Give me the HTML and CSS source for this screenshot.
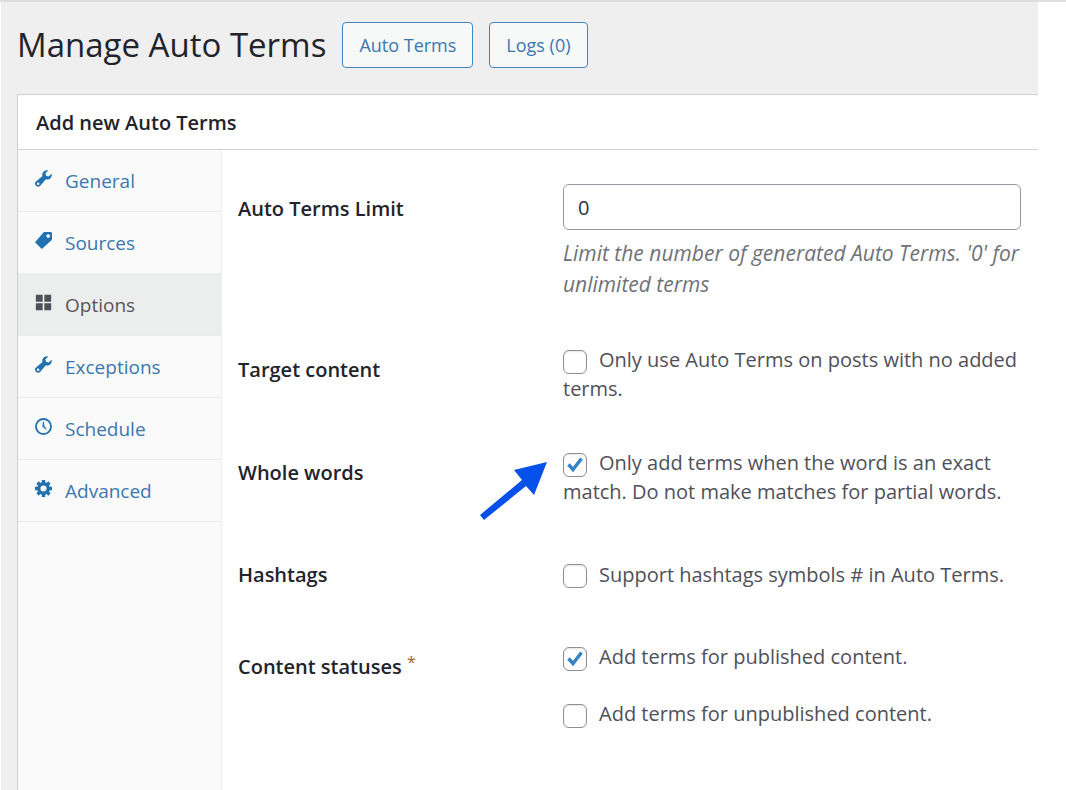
FILE: index.html
```html
<!DOCTYPE html>
<html lang="en">
<head>
    <meta charset="UTF-8">
    <meta name="viewport" content="width=device-width, initial-scale=1.0">
    <title>Manage Auto Terms</title>
    <link rel="stylesheet" href="styles.css">
</head>
<body>

    <div class="wrap">
        <header class="page-header">
            <h1>Manage Auto Terms</h1>
            <button type="button" class="page-action">Auto Terms</button>
            <button type="button" class="page-action">Logs (0)</button>
        </header>

        <section class="postbox">
            <h2>Add new Auto Terms</h2>
            <div class="postbox-inside">
                <nav class="tabs">
                    <a href="#general">
                        <svg viewBox="0 0 20 20"><path fill-rule="evenodd" d="M19.500 4.500 16 7.500l-3-.7-.7-3L15.500.5C12.500-.4 9.500 1.300 8.700 4c-.3 1-.2 2 .1 3L1.200 13.600a3.500 3.500 0 1 0 5 5L12.800 11c1 .4 2 .4 3 .1 2.800-.8 4.500-3.700 3.700-6.600zM3.700 14.700a1.500 1.500 0 1 1 0 3 1.500 1.500 0 0 1 0-3z"/></svg>
                        General
                    </a>
                    <a href="#sources">
                        <svg viewBox="0 0 20 20"><path fill-rule="evenodd" d="M10.500 0H19l1 1v8L8 20l-8-8zM15.500 2.500a2.200 2.200 0 1 0 0 4.400 2.200 2.200 0 0 0 0-4.400z"/></svg>
                        Sources
                    </a>
                    <a href="#options" class="active">
                        <svg viewBox="0 0 20 20"><path d="M1 1h8v8H1zM11 1h8v8h-8zM1 11h8v8H1zM11 11h8v8h-8z"/></svg>
                        Options
                    </a>
                    <a href="#exceptions">
                        <svg viewBox="0 0 20 20"><path fill-rule="evenodd" d="M19.500 4.500 16 7.500l-3-.7-.7-3L15.500.5C12.500-.4 9.500 1.300 8.700 4c-.3 1-.2 2 .1 3L1.200 13.600a3.500 3.500 0 1 0 5 5L12.800 11c1 .4 2 .4 3 .1 2.800-.8 4.500-3.700 3.700-6.600zM3.700 14.700a1.500 1.500 0 1 1 0 3 1.500 1.500 0 0 1 0-3z"/></svg>
                        Exceptions
                    </a>
                    <a href="#schedule">
                        <svg viewBox="0 0 20 20"><circle cx="10" cy="10" r="8.800" fill="none" stroke="currentColor" stroke-width="2.200"/><path d="M9.300 4.500h1.200l.6 5.300 2.700 3.400-.7.700-4.300-3.500z"/></svg>
                        Schedule
                    </a>
                    <a href="#advanced">
                        <svg viewBox="0 0 20 20"><circle cx="10" cy="10" r="5.600" fill="none" stroke="currentColor" stroke-width="4"/><path d="M10 0v4M10 16v4M0 10h4M16 10h4M3 3l3 3M14 14l3 3M17 3l-3 3M6 14l-3 3" fill="none" stroke="currentColor" stroke-width="4"/></svg>
                        Advanced
                    </a>
                </nav>

                <form class="options-form">
                    <div class="form-row">
                        <label class="form-label" for="terms-limit">Auto Terms Limit</label>
                        <div class="form-field">
                            <input type="text" id="terms-limit" value="0">
                            <p class="description">Limit the number of generated Auto Terms. '0' for unlimited terms</p>
                        </div>
                    </div>
                    <div class="form-row">
                        <div class="form-label">Target content</div>
                        <div class="form-field">
                            <input type="checkbox" id="target-content"><label for="target-content">Only use Auto Terms on posts with no added terms.</label>
                        </div>
                    </div>
                    <div class="form-row">
                        <div class="form-label">Whole words</div>
                        <div class="form-field">
                            <svg class="arrow" viewBox="0 0 68 58"><path fill="#0550e8" d="M67 0 34 8l8 10L0 53l4 5 42-34 8 9z"/></svg>
                            <input type="checkbox" id="whole-words" checked><label for="whole-words">Only add terms when the word is an exact match. Do not make matches for partial words.</label>
                        </div>
                    </div>
                    <div class="form-row centered">
                        <div class="form-label">Hashtags</div>
                        <div class="form-field">
                            <input type="checkbox" id="hashtags"><label for="hashtags">Support hashtags symbols # in Auto Terms.</label>
                        </div>
                    </div>
                    <div class="form-row">
                        <div class="form-label">Content statuses <span class="required">*</span></div>
                        <div class="form-field statuses">
                            <div><input type="checkbox" id="published" checked><label for="published">Add terms for published content.</label></div>
                            <div><input type="checkbox" id="unpublished"><label for="unpublished">Add terms for unpublished content.</label></div>
                        </div>
                    </div>
                </form>
            </div>
        </section>
    </div>

</body>
</html>
```
FILE: styles.css
```css
* {
    box-sizing: border-box;
}

body {
    margin: 0;
    min-height: 100vh;
    display: flex;
    border-top: 2px solid #dedede;
    background-color: #fff;
    color: #50505a;
    font-family: "Segoe UI", "Open Sans", sans-serif;
    font-size: 20px;
    line-height: 29px;
}

.wrap {
    flex: 1;
    display: flex;
    flex-direction: column;
    margin: 0 28px 0 1px;
    padding-left: 16px;
    background-color: #efefef;
}

.page-header {
    display: flex;
    align-items: center;
    gap: 16px;
    height: 92px;
    padding-bottom: 6px;
}

.page-header h1 {
    margin: 0;
    color: #23232b;
    font-size: 33px;
    font-weight: 400;
    line-height: 46px;
}

.page-action {
    height: 46px;
    padding: 0 16px;
    border: 1px solid #4385c0;
    border-radius: 4px;
    background-color: #f7f8f8;
    color: #3a77b0;
    font-family: inherit;
    font-size: 18px;
    cursor: pointer;
}

.postbox {
    flex: 1;
    display: flex;
    flex-direction: column;
    border-top: 1px solid #d0d0d0;
    border-left: 1px solid #d0d0d0;
    background-color: #fff;
}

.postbox h2 {
    margin: 0;
    padding: 13px 18px 11px;
    border-bottom: 1px solid #d0d0d0;
    color: #23232b;
    font-size: 20px;
    font-weight: 600;
    line-height: 30px;
}

.postbox-inside {
    flex: 1;
    display: flex;
}

.tabs {
    flex: none;
    width: 204px;
    border-right: 1px solid #eee;
    background-color: #fafafa;
}

.tabs a {
    display: flex;
    align-items: center;
    gap: 13px;
    height: 62px;
    padding: 2px 0 0 17px;
    border-bottom: 1px solid #ebebeb;
    color: #3a77b0;
    font-size: 19px;
    text-decoration: none;
}

.tabs svg {
    width: 17px;
    height: 17px;
    margin-bottom: 6px;
    fill: #2271b1;
    color: #2271b1;
}

.tabs a.active {
    background-color: #eceeed;
    color: #5a5459;
}

.tabs a.active svg {
    fill: #50505a;
}

.options-form {
    flex: 1;
    display: flex;
    flex-direction: column;
    gap: 45px;
    padding: 34px 17px 34px 16px;
}

.form-row {
    display: grid;
    grid-template-columns: 325px 1fr;
    min-height: 46px;
}

.form-label {
    padding-top: 10px;
    color: #23232b;
    font-weight: 600;
}

.centered {
    align-items: center;
}

.centered .form-label {
    padding-top: 0;
}

.required {
    color: #a0622f;
    font-weight: 400;
    font-size: 16px;
    vertical-align: top;
    line-height: 20px;
}

.form-field {
    position: relative;
}

.form-field input[type="text"] {
    display: block;
    width: 100%;
    height: 46px;
    padding: 0 14px;
    border: 1px solid #96969e;
    border-radius: 6px;
    color: #2c3338;
    font-family: inherit;
    font-size: 20px;
}

.form-field input[type="checkbox"] {
    appearance: none;
    width: 24px;
    height: 24px;
    margin: 0 12px 0 0;
    border: 1px solid #8c8f94;
    border-radius: 6px;
    background-color: #fff;
    box-shadow: inset 0 1px 2px rgba(0, 0, 0, 0.1);
    vertical-align: middle;
}

.form-field input[type="checkbox"]:checked {
    background-image: url("data:image/svg+xml,%3Csvg xmlns='http://www.w3.org/2000/svg' viewBox='0 0 22 22'%3E%3Cpath d='M4.500 10.500 9 15.500 17.500 4.500' fill='none' stroke='%233582c4' stroke-width='3.400'/%3E%3C/svg%3E");
}

.description {
    margin: 8px 0 0;
    color: #6f7278;
    font-size: 21px;
    font-style: italic;
    line-height: 31px;
}

.statuses {
    display: flex;
    flex-direction: column;
    gap: 28px;
}

/* pointer to the whole words tick box */
.arrow {
    position: absolute;
    top: 14px;
    left: -83px;
    width: 68px;
    height: 58px;
}
```
